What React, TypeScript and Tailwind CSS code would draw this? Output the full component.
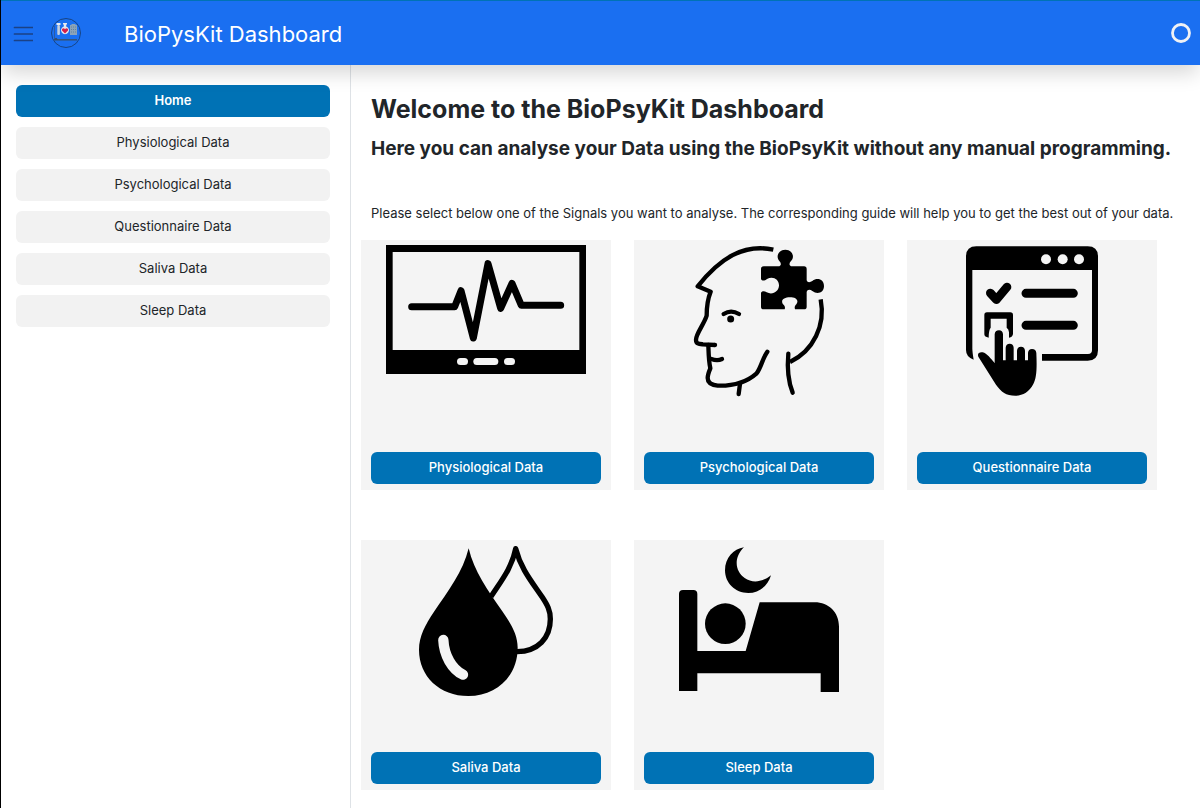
import type { ReactNode } from "react";

type Signal = {
  name: string;
  icon: ReactNode;
};

function MonitorIcon() {
  return (
    <svg viewBox="3 15 750 636" className="block w-full" aria-hidden="true">
      <path fillRule="evenodd" d="M78 30H678V417H78ZM98 51V345H658V51Z" />
      <path
        d="M155 215H284L303 167L340 309L384 86L422 220L456 145L484 211H602"
        fill="none"
        stroke="black"
        strokeWidth="21"
        strokeLinecap="round"
        strokeLinejoin="round"
      />
      <g fill="#f4f4f4">
        <rect x="291" y="369" width="33" height="21" rx="10.5" />
        <rect x="340" y="369" width="75" height="21" rx="10.5" />
        <rect x="432" y="369" width="33" height="21" rx="10.5" />
      </g>
    </svg>
  );
}

function HeadIcon() {
  return (
    <svg viewBox="12 15 750 636" className="block w-full" aria-hidden="true">
      <g fill="none" stroke="black" strokeWidth="13" strokeLinejoin="round">
        <path d="M430 44C340 25 270 70 203 154L242 170C232 195 230 220 230 242C222 268 198 296 198 314C198 327 207 327 219 328L255 330" />
        <path d="M255 330h.1M235 330C236 360 236 378 241 400C235 414 233 420 233 429C233 444 245 450 263 452C300 453 346 445 380 415C394 396 397 371 412 350" strokeLinecap="round" />
        <path d="M244 372Q262 379 276 372M330 446L326 477M281 237Q303 223 327 237" strokeLinecap="round" />
        <path d="M475 356C471 400 474 438 488 473" strokeLinecap="round" />
        <path d="M572 193C587 270 551 347 480 381" />
      </g>
      <circle cx="302" cy="252" r="10.5" />
      <path d="M401 94H448C454 91 454 84 448 78C437 66 444 44 466 44C488 44 495 66 483 78C477 84 477 91 483 94H522Q530 94 530 102V136C532 143 540 143 547 138C562 126 582 133 582 153C582 173 562 180 547 168C540 163 532 163 530 171V215Q530 223 522 223H495C493 217 494 213 499 208C508 195 497 187 480 187C462 187 451 195 459 208C465 213 466 217 464 223H401Q393 223 393 215V173C398 167 404 169 410 172C427 181 447 170 447 151C447 131 427 122 411 132C403 138 396 138 393 132V102Q393 94 401 94Z" />
    </svg>
  );
}

function SurveyIcon() {
  return (
    <svg viewBox="9 15 750 636" className="block w-full" aria-hidden="true">
      <path d="M186 65Q186 34 217 34H551Q582 34 582 65V346Q582 377 551 377H414V357H552Q564 357 564 346V105H205V340Q205 352 209 374Q186 366 186 345Z" />
      <g fill="#f4f4f4">
        <circle cx="426" cy="73" r="15" />
        <circle cx="476" cy="73" r="15" />
        <circle cx="525" cy="73" r="15" />
      </g>
      <path d="M259 174L277 194L309 156" fill="none" stroke="black" strokeWidth="26" strokeLinecap="round" strokeLinejoin="round" />
      <path d="M366 175H508M366 271H508" stroke="black" strokeWidth="27" strokeLinecap="round" />
      <path d="M249 232H319Q327 232 327 240V297Q326 306 315 308V292Q314 282 308 278V251H260V278Q254 285 254 308Q241 306 241 298V240Q241 232 249 232Z" />
      <path d="M272 384V298Q273 286 285 286Q296 286 297 298V376H305V338Q306 326 317 326Q328 326 329 338V376H339V347Q340 335 351 335Q362 335 363 347V376H372V354Q373 342 384 342Q396 342 397 354C399 400 398 429 388 447C376 471 356 482 334 482C306 482 292 471 276 449L223 365C219 355 227 350 236 352C249 355 260 371 272 384Z" />
    </svg>
  );
}

function DropsIcon() {
  return (
    <svg viewBox="3 15 750 636" className="block w-full" aria-hidden="true">
      <path d="M393 185C424 137 455 100 467 41C482 100 513 137 547 187C562 210 571 226 571 252C571 309 534 349 471 350" fill="none" stroke="black" strokeWidth="16" strokeLinejoin="round" />
      <path d="M326 40C342 109 383 166 428 230C453 266 473 299 473 338C473 422 411 483 325 483C239 483 177 424 177 344C177 303 196 269 222 230C264 169 309 110 326 40Z" />
      <path d="M250 315C252 361 276 403 309 419" fill="none" stroke="#f4f4f4" strokeWidth="31" strokeLinecap="round" />
    </svg>
  );
}

function BedIcon() {
  return (
    <svg viewBox="12 15 750 636" className="block w-full" aria-hidden="true">
      <path d="M342 37C310 68 315 109 344 129C369 147 402 139 423 121C414 154 386 174 355 174C315 174 285 144 285 106C285 69 310 42 342 37Z" />
      <path d="M147 177Q147 165 159 165H190Q202 165 202 177V348H347L389 202H554C596 202 627 232 627 275V471H572V415H202V468H147Z" />
      <circle cx="286" cy="266" r="61" />
    </svg>
  );
}

function LogoIcon() {
  return (
    <svg viewBox="0 0 30 30" className="size-[30px]" aria-hidden="true">
      <circle cx="15" cy="15" r="14.5" fill="none" stroke="#173f78" strokeWidth="0.9" />
      <path d="M3.5 8V22" stroke="#2c5794" strokeWidth="0.8" />
      <path d="M3 21.8H26" stroke="#34557c" strokeWidth="1.6" />
      <path d="M3 21.5l2-1.8l2 1.8z" fill="#34465e" />
      <rect x="5.5" y="5" width="4" height="2" fill="#e8ecf2" />
      <rect x="6.3" y="7" width="2.6" height="10" rx="1" fill="#c6d0dc" />
      <path d="M12 5h4v1.4h-.8V8.4A4 4 0 1 1 12.800 8.4V6.400H12Z" fill="#e6e7ee" />
      <path d="M14 15.500l-3-3q-.5-2 1.300-2.300q1.200 0 1.700 1q.6-1 1.800-1q1.800.4 1.200 2.300Z" fill="#d5204b" />
      <path d="M19 7h1.500V6h4v1H26V17H19Z" fill="#8ba3b8" />
      <path d="M20 9h5M20 11.500h5M20 14h5" stroke="#62829f" strokeWidth="1" strokeDasharray="1 1" />
    </svg>
  );
}

const signals: Signal[] = [
  { name: "Physiological Data", icon: <MonitorIcon /> },
  { name: "Psychological Data", icon: <HeadIcon /> },
  { name: "Questionnaire Data", icon: <SurveyIcon /> },
  { name: "Saliva Data", icon: <DropsIcon /> },
  { name: "Sleep Data", icon: <BedIcon /> },
];

function Header() {
  return (
    <header className="relative z-10 flex h-[65px] items-center border-t border-[#0072b5] bg-[#1a6ff1] pr-[9px] pl-3 shadow-[0_10px_20px_-2px_rgba(0,0,0,0.16)]">
      <button type="button" aria-label="Toggle menu" className="flex h-5 w-5 items-center">
        <svg viewBox="0 0 20 20" className="size-5" aria-hidden="true">
          <path d="M1.500 4.500H19.500M1.500 11H19.500M1.500 17.500H19.500" stroke="#1b4185" strokeWidth="1.700" strokeLinecap="round" />
        </svg>
      </button>
      <a href="#home" aria-label="BioPsyKit" className="ml-[18px]">
        <LogoIcon />
      </a>
      <a href="#home" className="ml-[43px] pt-0.5 text-[22px] leading-8 text-white">
        BioPysKit Dashboard
      </a>
      <svg viewBox="0 0 20 20" className="ml-auto size-5" role="img" aria-label="Idle">
        <circle cx="10" cy="10" r="8.500" fill="none" stroke="#eff1f5" strokeWidth="2.800" />
      </svg>
    </header>
  );
}

function Sidebar() {
  return (
    <nav className="flex w-[350px] shrink-0 flex-col gap-2.5 border-r border-[#dee2e6] pt-5 pr-5 pl-[15px] text-[13px]">
      <button type="button" aria-current="page" className="h-8 rounded-md bg-[#0072b5] font-semibold text-white">
        Home
      </button>
      {signals.map((signal) => (
        <button key={signal.name} type="button" className="h-8 rounded-md bg-[#f2f2f2] text-[#212529]">
          {signal.name}
        </button>
      ))}
    </nav>
  );
}

function SignalCard({ name, icon }: Signal) {
  return (
    <article className="flex flex-col bg-[#f4f4f4] pb-1.5">
      {icon}
      <button type="button" className="mx-2.5 h-8 rounded-md bg-[#0072b5] text-[13px] font-medium text-white">
        {name}
      </button>
    </article>
  );
}

export default function App() {
  return (
    <div className="flex min-h-screen flex-col border-l border-black bg-white font-['Inter','Liberation_Sans',sans-serif] text-[#212529]">
      <Header />
      <div className="flex flex-1">
        <Sidebar />
        <main className="min-w-0 flex-1 px-2.5 pb-4">
          <div className="px-2.5 pt-7">
            <h1 className="text-[25px] leading-8 font-bold">Welcome to the BioPsyKit Dashboard</h1>
            <h2 className="mt-3 text-[19px] leading-6 font-bold">
              Here you can analyse your Data using the BioPsyKit without any manual programming.
            </h2>
            <p className="mt-[42px] text-[13px] leading-5">
              Please select below one of the Signals you want to analyse. The corresponding guide will help you to get the best
              out of your data.
            </p>
          </div>
          <div className="mt-[17px] grid grid-cols-[repeat(auto-fill,250px)] gap-x-[23px] gap-y-[50px]">
            {signals.map((signal) => (
              <SignalCard key={signal.name} name={signal.name} icon={signal.icon} />
            ))}
          </div>
        </main>
      </div>
    </div>
  );
}
